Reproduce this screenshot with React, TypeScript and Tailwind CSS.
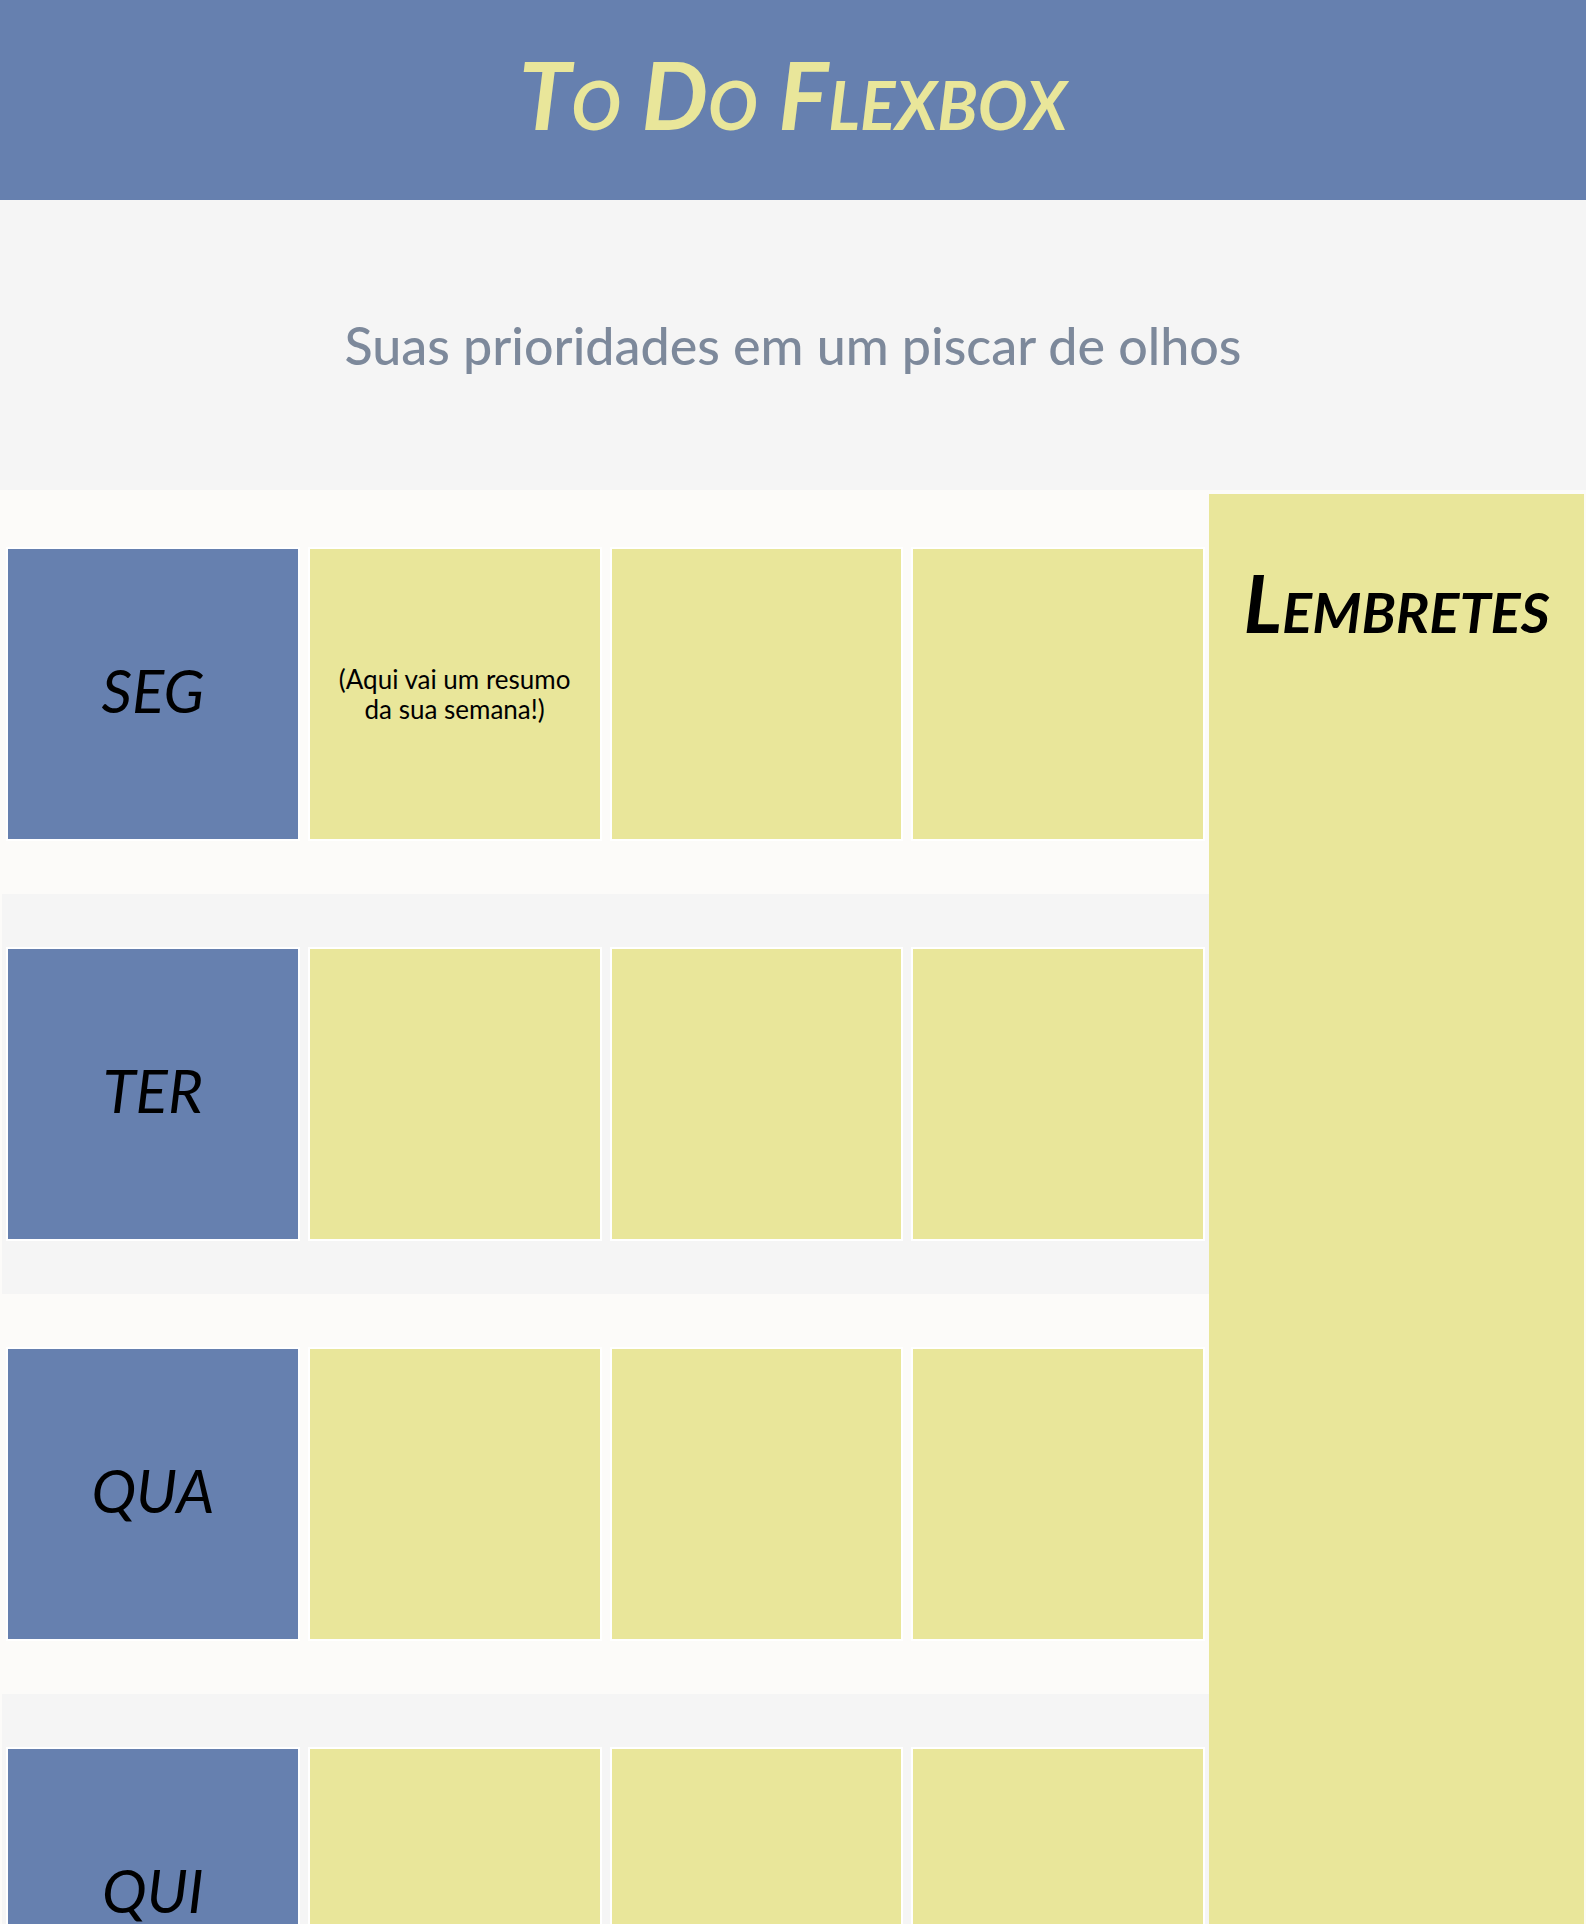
const days = [
  { name: "SEG", notes: ["(Aqui vai um resumo da sua semana!)", "", ""] },
  { name: "TER", notes: ["", "", ""] },
  { name: "QUA", notes: ["", "", ""] },
  { name: "QUI", notes: ["", "", ""] },
];

export default function App() {
  return (
    <div className="h-screen overflow-x-hidden overflow-y-auto bg-[#fcfbf9] font-['Lato',sans-serif] text-black">
      <header className="flex h-[200px] items-center justify-center bg-[#6680af] pb-3">
        <h1 className="text-[94px] leading-none font-bold italic text-[#e9e69a] [font-variant-caps:small-caps]">
          To Do Flexbox
        </h1>
      </header>
      <section className="flex h-[290px] items-center justify-center bg-[#f5f5f5]">
        <h2 className="text-[52px] leading-none font-medium text-[#7d899b]">
          Suas prioridades em um piscar de olhos
        </h2>
      </section>
      <main className="flex px-0.5 pt-1">
        <div className="min-w-0 flex-1">
          {days.map((day) => (
            <section
              key={day.name}
              className="grid h-[400px] grid-cols-4 items-center gap-2 px-1 even:bg-[#f5f5f5]"
            >
              <h3 className="flex h-[294px] items-center justify-center border-2 border-white bg-[#6680af] pb-2 text-[60px] leading-[52px] italic">
                {day.name}
              </h3>
              {day.notes.map((note, index) => (
                <div
                  key={index}
                  className="flex h-[294px] items-center justify-center border-2 border-white bg-[#e9e69a] px-6 text-center text-[26px] leading-[30px]"
                >
                  <p>{note}</p>
                </div>
              ))}
            </section>
          ))}
        </div>
        <aside className="w-[375px] shrink-0 bg-[#e9e69a] pt-17 text-center">
          <h2 className="text-[80px] leading-none font-bold italic [font-variant-caps:small-caps]">
            Lembretes
          </h2>
        </aside>
      </main>
    </div>
  );
}
